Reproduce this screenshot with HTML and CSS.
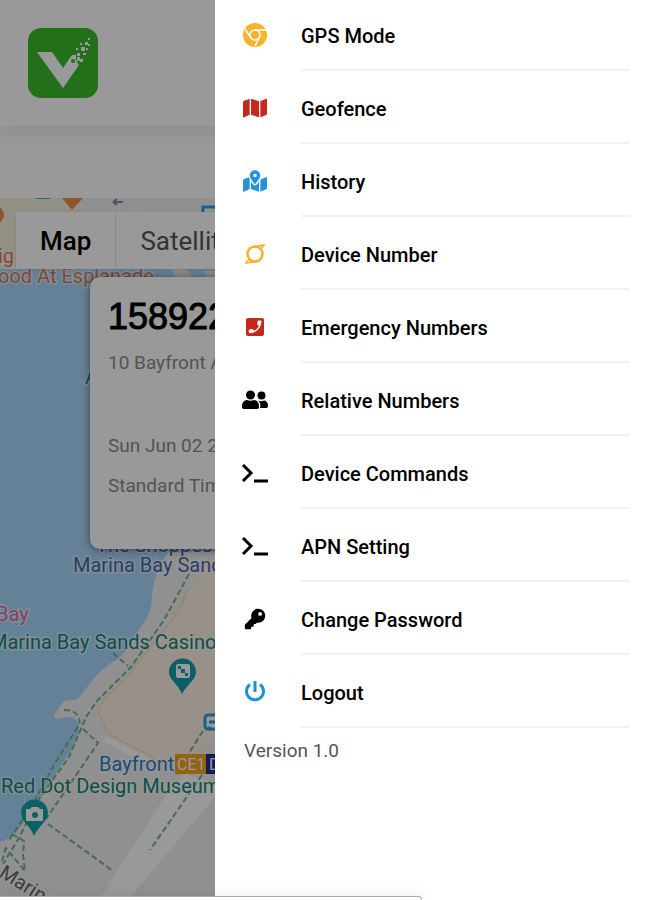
FILE: index.html
```html
<!DOCTYPE html>
<html lang="en">
<head>
  <meta charset="UTF-8">
  <meta name="viewport" content="width=device-width, initial-scale=1.0">
  <title>Tracker</title>
  <link rel="stylesheet" href="styles.css">
</head>
<body>

<header class="header">
  <svg class="logo" viewBox="0 0 70 70" role="img" aria-label="Logo">
    <rect width="70" height="70" rx="13" fill="#3bbb2e"/>
    <path d="M9 24h15l11 16 8-12 4 2 3 6 1 1-16 23z" fill="#fff"/>
    <circle cx="45" cy="33" r="2" fill="#3bbb2e"/>
    <path d="M44 27h4v4h-4zM49 29h3v4h-3zM52 31h3v3h-3zM47 35h3v3h-3zM49 25h3v3h-3zM53 19h4v4h-4zM48 20h2v2h-2zM52 15h2v2h-2zM55 25h3v2h-3zM57 14h3v3h-3zM60 10h2v2h-2zM60 16h2v2h-2zM58 20h2v2h-2z" fill="#fff"/>
  </svg>
</header>

<main class="map">
  <svg class="map-canvas" viewBox="0 198 657 702" preserveAspectRatio="xMinYMin slice">
    <rect y="198" width="657" height="702" fill="#f0f1f1"/>
    <path d="M0 198h30l80 20 105 5v45H0z" fill="#f4f0dd"/>
    <path d="M35 198h180v16l-100-6z" fill="#eceff0"/>
    <!-- water -->
    <path d="M0 269h215v283h-47c-8 12-14 24-16 44 0 12-3 20-11 31-8 13-15 27-25 33-14 7-26 23-32 31-4 7-8 10-13 9l-7 1-10 14c2 7 7 2 10 3 9-4 16 3 15 13-2 14-17 31-29 52-5 10-11 20-25 24v-14c-2 16 1 22-1 28-5 10-13 18-24 21z" fill="#a9d8fc"/>
    <path d="M172 269h14l8 10h-18zM204 271h11v8h-7z" fill="#ece8dc"/>
    <!-- resort -->
    <path d="M215 552c-14 18-22 36-37 60-18 28-41 56-64 78-12 9-18 16-18 22l8 9c0 14 14 19 25 24 16 7 27 13 40 22l46-25h442V552z" fill="#fcf2e4"/>
    <path d="M187 590c-7 28-33 49-57 83-10 13-24 22-31 34-4 9 6 12 7 22 14 16 35 20 50 30" fill="none" stroke="#f7e3c2" stroke-width="2"/>
    <!-- roads -->
    <path d="M102 741l5-5 43 22-5 5z" fill="#fff"/>
    <path d="M167 793l18-20 30 0v24l-90 106H97z" fill="#fff"/>
    <path d="M182 773l30-28h20v45z" fill="#f0f1f1"/>
    <!-- walkways -->
    <g class="path">
      <path d="M189 574l-25 46-33 47-34 34-11 16-17 40-32 45-18 36-16 26"/>
      <path d="M113 653l15 13"/>
      <path d="M64 710c12-1 17 8 15 15l-24 38-22 41-24 36"/>
      <path d="M83 729l15 14-52 76"/>
      <path d="M48 824l65 47"/>
      <path d="M203 731l-28 44"/>
      <path d="M202 775l-52 75"/>
      <path d="M12 834l12 7-1 14 2 16-19-23"/>
      <path d="M6 847l-4 14"/>
    </g>
    <g class="pin">
      <path d="M196 672a13.500 13.500 0 1 0-27 0c0 8 9 12 13 22 5-10 14-14 14-22z" fill="#12a0a8"/>
      <rect x="176" y="664" width="14" height="14" rx="2" fill="#fff"/>
      <path d="M178 666h3v3h-3zM181 669h4v4h-4zM185 673h3v3h-3z" fill="#12a0a8"/>
      <path d="M48 813a13.500 13.500 0 1 0-27 0c0 8 9 12 13 23 5-11 14-15 14-23z" fill="#12a0a8"/>
      <path d="M26 809h4l2-2h6l2 2h3v12H26z" fill="#fff"/>
      <circle cx="35" cy="815" r="3" fill="#12a0a8"/>
      <path d="M62 198h21L72 210z" fill="#f58a45"/>
      <circle cx="-5" cy="215" r="9" fill="#f58a45"/>
    </g>
    <path d="M36 198h14" stroke="#4b9fd8" stroke-width="2" fill="none"/>
    <path d="M113 202h10m-10 0l4-3m-4 3l4 3" stroke="#7f8fa8" stroke-width="2" fill="none"/>
    <g fill="#fff" stroke="#2a9fe0" stroke-width="3">
      <path d="M203 213v-6h14"/>
      <rect x="205" y="715" width="18" height="14" rx="3"/>
      <path d="M209 722h8M210 727l-2 3" fill="none"/>
    </g>
    <g class="label">
      <text x="-2" y="263" fill="#d97a4e">ig</text>
      <text x="-2" y="283" fill="#d97a4e">ood At Esplanade</text>
      <text x="85" y="384" fill="#0f8a80">A</text>
      <text x="96" y="552" fill="#4668ae">The Shoppes at</text>
      <text x="73" y="572" fill="#4668ae">Marina Bay Sands</text>
      <text x="-4" y="621" fill="#dc6aa8">Bay</text>
      <text x="-10" y="649" fill="#138577">Marina Bay Sands Casino</text>
      <text x="99" y="771" fill="#2a7fc8">Bayfront</text>
      <text x="1" y="793" fill="#138577">Red Dot Design Museum</text>
      <text transform="translate(-2 876) rotate(32)" fill="#666">Marina</text>
    </g>
    <rect x="175" y="754" width="31" height="20" fill="#f5a61e"/>
    <rect x="206" y="754" width="31" height="20" fill="#1b2f93"/>
    <text class="line" x="177" y="770">CE1</text>
    <text class="line" x="209" y="770">DT16</text>
  </svg>

  <div class="map-type">
    <button class="active">Map</button>
    <button>Satellite</button>
  </div>

  <section class="info">
    <h2>158922</h2>
    <p class="address">10 Bayfront Ave</p>
    <p>Sun Jun 02 2</p>
    <p>Standard Time</p>
  </section>
</main>

<div class="backdrop"></div>

<nav class="drawer">
  <ul class="menu">
    <li>
      <a href="#">
        <svg viewBox="0 0 28 28">
          <circle cx="14" cy="14" r="12" fill="#f7b42c"/>
          <g fill="none" stroke="#fff" stroke-width="1.500"><circle cx="14" cy="14" r="5"/><path d="M14 9h11M9.700 16.500L4 8M18.300 16.500L14 25"/></g>
        </svg>
        <span>GPS Mode</span>
      </a>
    </li>
    <li>
      <a href="#">
        <svg viewBox="-48 0 672 512" fill="#c5281c"><path d="M0 118v346c0 11 11 19 22 15l138-63V32L20 88A32 32 0 0 0 0 118zM192 416l192 64V96L192 32v384zM554 33L416 96v384l140-56a32 32 0 0 0 20-30V48c0-11-11-19-22-15z"/></svg>
        <span>Geofence</span>
      </a>
    </li>
    <li>
      <a href="#">
        <svg viewBox="-48 0 672 512" fill="#2693d8"><path d="M288 0c-70 0-126 56-126 126 0 56 82 159 114 196 6 8 18 8 24 0 32-37 114-140 114-196C414 56 358 0 288 0zm0 168a42 42 0 1 1 0-84 42 42 0 0 1 0 84zM20 216a32 32 0 0 0-20 30v250c0 11 11 19 22 15l138-63V215c-9-16-16-32-21-47L20 216zM288 360c-14 0-27-6-37-17-19-23-40-50-59-77v182l192 64V266c-19 27-40 54-59 77-10 11-23 17-37 17zM554 161L416 224v288l140-56a32 32 0 0 0 20-30V176c0-11-11-19-22-15z"/></svg>
        <span>History</span>
      </a>
    </li>
    <li>
      <a href="#">
        <svg viewBox="0 0 28 28" fill="none" stroke="#f5b02a"><circle cx="14" cy="14" r="7.500" stroke-width="2.500"/><path d="M13 6.500l10-1.500c-1 2-2 2-3 4M15 21.500l-10 1.500c1-2 2-2 3-4" stroke-width="1.500"/></svg>
        <span>Device Number</span>
      </a>
    </li>
    <li>
      <a href="#">
        <svg viewBox="0 0 28 28"><rect x="5" y="5" width="18" height="18" rx="2" fill="#c5281c"/><path transform="translate(22.500 5.500) scale(-.7 .7)" d="M6.600 10.800c1.400 2.800 3.800 5.100 6.600 6.600l2.200-2.200c.3-.3.700-.4 1-.2 1.100.4 2.300.6 3.600.6.600 0 1 .4 1 1V20c0 .6-.4 1-1 1C10.600 21 3 13.400 3 4c0-.6.400-1 1-1h3.500c.6 0 1 .4 1 1 0 1.200.2 2.400.6 3.600.1.300 0 .7-.2 1z" fill="#fff"/></svg>
        <span>Emergency Numbers</span>
      </a>
    </li>
    <li>
      <a href="#">
        <svg viewBox="0 0 28 28"><circle cx="9.500" cy="9" r="4.500"/><circle cx="20.500" cy="9.500" r="4"/><path d="M1 20c0-4 3-6 5-6 2 1 5 1 7 0 3 0 5 3 5 6 0 2 0 3-2 3H3c-2 0-2-1-2-3zM17 14.500c2 1 4 1 6 0 2 0 4 2 4 5 0 2-1 2.500-2 2.500h-6c1-3 0-6-2-7.500z"/></svg>
        <span>Relative Numbers</span>
      </a>
    </li>
    <li>
      <a href="#">
        <svg viewBox="0 0 28 28" fill="none" stroke="#000" stroke-width="3"><path d="M2 6l8 8-8 8M13 22h14"/></svg>
        <span>Device Commands</span>
      </a>
    </li>
    <li>
      <a href="#">
        <svg viewBox="0 0 28 28" fill="none" stroke="#000" stroke-width="3"><path d="M2 6l8 8-8 8M13 22h14"/></svg>
        <span>APN Setting</span>
      </a>
    </li>
    <li>
      <a href="#">
        <svg viewBox="-96 -96 704 704"><path d="M512 176c0 97-79 176-176 176-11 0-22-1-33-3l-24 27a24 24 0 0 1-18 8h-37v40c0 13-11 24-24 24h-40v40c0 13-11 24-24 24H24c-13 0-24-11-24-24v-78c0-6 3-13 7-17l162-162c-6-17-9-36-9-55C160 79 239 0 336 0s176 79 176 176zm-176-48a48 48 0 1 0 96 0 48 48 0 0 0-96 0z"/></svg>
        <span>Change Password</span>
      </a>
    </li>
    <li>
      <a href="#">
        <svg viewBox="0 0 28 28" fill="none" stroke="#1f8fd6" stroke-width="3"><path d="M9 6.500a8.500 8.500 0 1 0 10 0M14 3v11"/></svg>
        <span>Logout</span>
      </a>
    </li>
  </ul>
  <p class="version">Version 1.0</p>
</nav>

<div class="status-bar"></div>

</body>
</html>
```
FILE: styles.css
```css
* {
  box-sizing: border-box;
}

body {
  font-family: Roboto, "Liberation Sans", sans-serif;
  margin: 0;
  background: white;
  color: black;
  min-height: 100vh;
  display: flex;
  flex-direction: column;
  overflow: hidden;
}

.header {
  padding: 28px 28px;
  box-shadow: 0 12px 14px rgba(0, 0, 0, 0.06);
}

.logo {
  display: block;
  width: 70px;
  height: 70px;
}

.map {
  flex: 1;
  position: relative;
  margin-top: 72px;
  padding: 14px 16px;
  overflow: hidden;
}

.map-canvas {
  position: absolute;
  top: 0;
  left: 0;
  width: 100%;
  height: 100%;
}

.path {
  fill: none;
  stroke: #74b58a;
  stroke-width: 2;
  stroke-dasharray: 6 3;
}

.label {
  font-size: 20px;
  paint-order: stroke;
  stroke: rgba(255, 255, 255, 0.5);
  stroke-width: 3px;
}

.line {
  font-size: 16px;
  fill: white;
}

.map-type {
  position: relative;
  display: inline-flex;
  background: white;
  box-shadow: 0 1px 4px rgba(0, 0, 0, 0.1);
}

.map-type button {
  height: 57px;
  padding: 0 24px;
  border: none;
  background: transparent;
  font-family: inherit;
  font-size: 26px;
  color: #565656;
}

.map-type button.active {
  border-right: 1px solid #e6e6e6;
  font-weight: 500;
  color: black;
}

.info {
  position: relative;
  width: 480px;
  height: 272px;
  margin: 8px 0 0 74px;
  padding: 18px;
  background: white;
  border-radius: 10px;
  box-shadow: 0 1px 8px rgba(0, 0, 0, 0.5);
}

.info h2 {
  margin: 0;
  font-family: "Liberation Sans", sans-serif;
  font-size: 36px;
  font-weight: 400;
  line-height: 44px;
  -webkit-text-stroke: 1px black;
}

.info p {
  margin: 0;
  font-size: 19px;
  line-height: 40px;
  color: #8c8c8c;
}

.info .address {
  margin: 4px 0 43px;
}

.backdrop {
  position: fixed;
  inset: 0;
  background: rgba(0, 0, 0, 0.4);
}

.drawer {
  position: fixed;
  top: 0;
  right: 0;
  bottom: 0;
  left: 215px;
  padding: 0 27px 0 26px;
  background: white;
  overflow: hidden;
}

.menu {
  list-style: none;
  margin: -2px 0 0;
  padding: 0;
}

.menu a {
  display: flex;
  align-items: center;
  gap: 32px;
  color: black;
  text-decoration: none;
}

.menu svg {
  flex: none;
  width: 28px;
  height: 28px;
}

.menu span {
  flex: 1;
  height: 73px;
  padding-top: 4px;
  border-bottom: 2px solid #f2f2f2;
  font-size: 20px;
  font-weight: 500;
  line-height: 68px;
}

.version {
  margin: 11px 3px;
  font-size: 19px;
  line-height: 24px;
  color: #555;
}

.status-bar {
  position: fixed;
  left: 0;
  bottom: 0;
  width: 422px;
  height: 4px;
  background: white;
  border-top: 1px solid #aaa;
  border-right: 1px solid #aaa;
  border-top-right-radius: 5px;
  box-shadow: 0 0 14px rgba(0, 0, 0, 0.15);
}
```
